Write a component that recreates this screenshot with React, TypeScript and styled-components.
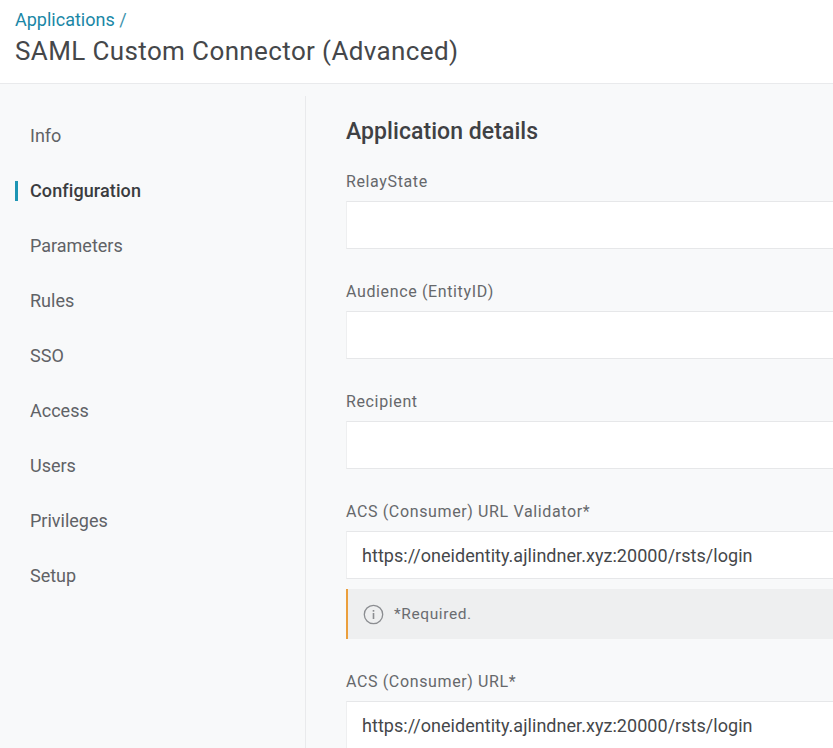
import React from "react";
import styled, { createGlobalStyle } from "styled-components";

const NAV_ITEMS = ["Info", "Configuration", "Parameters", "Rules", "SSO", "Access", "Users", "Privileges", "Setup"];
const URL_VALUE = "https://oneidentity.ajlindner.xyz:20000/rsts/login";

const GlobalStyle = createGlobalStyle`
  html, body {
    margin: 0;
    height: 100%;
    overflow: hidden;
    background: #f8f9fa;
    font-family: Roboto, "Liberation Sans", sans-serif;
  }
`;

const App = () => {
  return (
    <Page>
      <GlobalStyle />
      <Header>
        <Breadcrumb>
          <BreadcrumbLink href="#">Applications</BreadcrumbLink> /
        </Breadcrumb>
        <PageTitle>SAML Custom Connector (Advanced)</PageTitle>
      </Header>
      <Body>
        <Sidebar>
          {NAV_ITEMS.map((item) => (
            <NavItem key={item} $active={item === "Configuration"}>
              {item}
            </NavItem>
          ))}
        </Sidebar>
        <Main>
          <SectionTitle>Application details</SectionTitle>
          <Field>
            <Label>RelayState</Label>
            <Input readOnly defaultValue="" />
          </Field>
          <Field>
            <Label>Audience (EntityID)</Label>
            <Input readOnly defaultValue="" />
          </Field>
          <Field>
            <Label>Recipient</Label>
            <Input readOnly defaultValue="" />
          </Field>
          <Field>
            <Label>ACS (Consumer) URL Validator*</Label>
            <Input readOnly defaultValue={URL_VALUE} />
            <Hint>
              <svg width="21" height="21" viewBox="0 0 21 21" fill="none">
                <circle cx="10.5" cy="10.5" r="9.2" stroke="#8b8d91" strokeWidth="1.3" />
                <rect x="9.7" y="9" width="1.6" height="6" fill="#8b8d91" />
                <rect x="9.7" y="6" width="1.6" height="1.7" fill="#8b8d91" />
              </svg>
              *Required.
            </Hint>
          </Field>
          <Field>
            <Label>ACS (Consumer) URL*</Label>
            <Input readOnly defaultValue={URL_VALUE} />
          </Field>
        </Main>
      </Body>
    </Page>
  );
};

const Page = styled.div`
  width: 833px;
  height: 748px;
  overflow: hidden;
  display: flex;
  flex-direction: column;
`;

const Header = styled.header`
  height: 84px;
  box-sizing: border-box;
  padding: 9px 15px 0;
  background: #fff;
  border-bottom: 1px solid #e9eaec;
  flex-shrink: 0;
`;

const Breadcrumb = styled.div`
  font-size: 18px;
  line-height: 21px;
  color: #3d93ad;
`;

const BreadcrumbLink = styled.a`
  color: #1a87a6;
  text-decoration: none;
`;

const PageTitle = styled.h1`
  margin: 6px 0 0;
  font-size: 26px;
  line-height: 31px;
  font-weight: 400;
  letter-spacing: 0.38px;
  color: #45474a;
`;

const Body = styled.div`
  flex: 1;
  display: flex;
  padding-top: 12px;
  min-height: 0;
`;

const Sidebar = styled.nav`
  width: 306px;
  box-sizing: border-box;
  flex-shrink: 0;
  padding-top: 12px;
  border-right: 1px solid #e9eaec;
`;

const NavItem = styled.div<{ $active?: boolean }>`
  position: relative;
  height: 55px;
  display: flex;
  align-items: center;
  padding-left: 30px;
  font-size: 18px;
  letter-spacing: ${(p) => (p.$active ? "0.1px" : "0")};
  font-weight: ${(p) => (p.$active ? 500 : 400)};
  color: ${(p) => (p.$active ? "#3a3c3f" : "#606266")};

  &::before {
    content: "";
    display: ${(p) => (p.$active ? "block" : "none")};
    position: absolute;
    left: 15px;
    top: 18px;
    width: 3px;
    height: 20px;
    background: #1d95b4;
  }
`;

const Main = styled.main`
  flex: 1;
  min-width: 0;
  padding: 23px 0 0 40px;
`;

const SectionTitle = styled.h2`
  margin: 0 0 27px;
  font-size: 23px;
  line-height: 26px;
  font-weight: 500;
  letter-spacing: 0.06px;
  color: #3f4144;
`;

const Field = styled.div`
  margin-bottom: 33px;
`;

const Label = styled.label`
  display: block;
  margin-bottom: 9px;
  font-size: 16px;
  line-height: 20px;
  letter-spacing: 0.63px;
  color: #66686b;
`;

const Input = styled.input`
  display: block;
  box-sizing: border-box;
  width: 100%;
  height: 48px;
  padding: 0 15px;
  background: #fff;
  border: 1px solid #e6e7e9;
  border-left-color: #eeeff0;
  border-right: none;
  outline: none;
  font-family: inherit;
  font-size: 18px;
  letter-spacing: 0.04px;
  color: #45474a;
`;

const Hint = styled.div`
  display: flex;
  align-items: center;
  gap: 10px;
  height: 50px;
  box-sizing: border-box;
  margin-top: 10px;
  padding-left: 15px;
  background: #eeeff0;
  border-left: 2px solid #eb9f3c;
  font-size: 15.5px;
  letter-spacing: 0.6px;
  color: #6a6c70;
`;

export default App;
